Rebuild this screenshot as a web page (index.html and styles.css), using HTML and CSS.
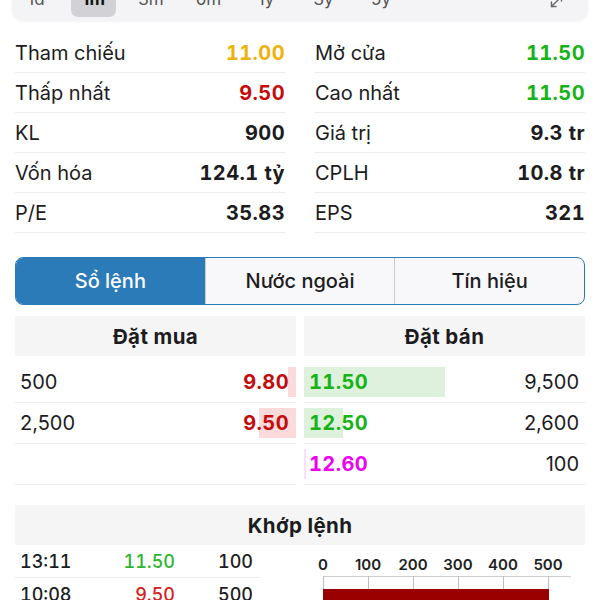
FILE: index.html
```html
<!DOCTYPE html>
<html lang="vi">
  <head>
    <meta charset="UTF-8" />
    <title>Chi tiết cổ phiếu</title>
    <meta name="viewport" content="width=device-width, initial-scale=1" />
    <link rel="stylesheet" href="styles.css">
  </head>
  <body>
    <div class="page">
      <!-- range picker -->
      <div class="range-bar">
        <span class="range">1d</span>
        <span class="range active">1m</span>
        <span class="range">3m</span>
        <span class="range">6m</span>
        <span class="range">1y</span>
        <span class="range">3y</span>
        <span class="range">5y</span>
        <span class="expand">
          <svg width="13" height="13" viewBox="0 0 13 13" fill="none" stroke="#666" stroke-width="1.4" stroke-linecap="round" stroke-linejoin="round">
            <path d="M1.5 11.5 L11.5 1.5" />
            <path d="M1.5 7 L1.5 11.5 L6 11.5" />
            <path d="M7 1.5 L11.5 1.5 L11.5 6" />
          </svg>
        </span>
      </div>

      <!-- quote stats -->
      <div class="stats">
        <div class="stat-col">
          <div class="stat-row"><span>Tham chiếu</span><b class="ref">11.00</b></div>
          <div class="stat-row"><span>Thấp nhất</span><b class="down">9.50</b></div>
          <div class="stat-row"><span>KL</span><b>900</b></div>
          <div class="stat-row"><span>Vốn hóa</span><b>124.1 tỷ</b></div>
          <div class="stat-row"><span>P/E</span><b>35.83</b></div>
        </div>
        <div class="stat-col">
          <div class="stat-row"><span>Mở cửa</span><b class="up">11.50</b></div>
          <div class="stat-row"><span>Cao nhất</span><b class="up">11.50</b></div>
          <div class="stat-row"><span>Giá trị</span><b>9.3 tr</b></div>
          <div class="stat-row"><span>CPLH</span><b>10.8 tr</b></div>
          <div class="stat-row"><span>EPS</span><b>321</b></div>
        </div>
      </div>

      <!-- segmented tabs -->
      <div class="tabs">
        <div class="tab active">Sổ lệnh</div>
        <div class="tab">Nước ngoài</div>
        <div class="tab">Tín hiệu</div>
      </div>

      <!-- order book -->
      <div class="book">
        <div class="book-side buy">
          <div class="book-head">Đặt mua</div>
          <div class="book-row">
            <span class="bar" style="width: 2.8%"></span>
            <span class="vol">500</span><span class="price down">9.80</span>
          </div>
          <div class="book-row">
            <span class="bar" style="width: 13.2%"></span>
            <span class="vol">2,500</span><span class="price down">9.50</span>
          </div>
          <div class="book-row"></div>
        </div>
        <div class="book-side sell">
          <div class="book-head">Đặt bán</div>
          <div class="book-row">
            <span class="bar" style="width: 50%"></span>
            <span class="price up">11.50</span><span class="vol">9,500</span>
          </div>
          <div class="book-row">
            <span class="bar" style="width: 13.9%"></span>
            <span class="price up">12.50</span><span class="vol">2,600</span>
          </div>
          <div class="book-row">
            <span class="bar ceil-bar" style="width: 0.6%"></span>
            <span class="price ceil">12.60</span><span class="vol">100</span>
          </div>
        </div>
      </div>

      <!-- matched trades -->
      <div class="match">
        <div class="match-head">Khớp lệnh</div>
        <div class="match-body">
          <div class="match-list">
            <div class="match-row"><span>13:11</span><span class="num up">11.50</span><span class="num">100</span></div>
            <div class="match-row"><span>10:08</span><span class="num down">9.50</span><span class="num">500</span></div>
          </div>
          <svg class="chart" width="280" height="80" viewBox="0 0 280 80">
            <g class="axis-labels" text-anchor="middle">
              <text x="18" y="25">0</text>
              <text x="63" y="25">100</text>
              <text x="108" y="25">200</text>
              <text x="153" y="25">300</text>
              <text x="198" y="25">400</text>
              <text x="243" y="25">500</text>
            </g>
            <line x1="18" y1="31.5" x2="266" y2="31.5" stroke="#cfcfcf" />
            <g stroke="#bdbdbd">
              <line x1="18.5" y1="31" x2="18.5" y2="44" />
              <line x1="63.5" y1="31" x2="63.5" y2="44" />
              <line x1="108.5" y1="31" x2="108.5" y2="44" />
              <line x1="153.5" y1="31" x2="153.5" y2="44" />
              <line x1="198.5" y1="31" x2="198.5" y2="44" />
              <line x1="243.5" y1="31" x2="243.5" y2="44" />
            </g>
            <rect x="18" y="44" width="226" height="30" fill="#990000" />
          </svg>
        </div>
      </div>
    </div>
  </body>
</html>
```

FILE: styles.css
```css
:root {
  --text: #1c1c1e;
  --muted: #555;
  --line: #ececec;
  --head-bg: #f5f5f5;
  --blue: #2b7bb9;
  --up: #17b317;
  --down: #c40c0c;
  --ref: #f0b20a;
  --ceil: #f000f0;
}
* {
  box-sizing: border-box;
}
body {
  margin: 0;
  font-family: Inter, "Noto Sans", sans-serif;
  color: var(--text);
  background: #fff;
}
.page {
  padding: 0 15px 40px;
  margin-top: -18px;
}

/* ---------- Range bar ---------- */
.range-bar {
  display: flex;
  align-items: flex-end;
  gap: 12.5px;
  height: 38px;
  margin: 0 -3px;
  padding: 0 0 3px 1.5px;
  background: #f4f4f6;
  border-radius: 12px;
  box-shadow: 0 2px 3px rgba(0, 0, 0, 0.05);
}
.range {
  width: 45px;
  height: 29px;
  display: flex;
  align-items: center;
  justify-content: center;
  padding-bottom: 7px;
  font-size: 17px;
  color: var(--muted);
  border-radius: 7px;
}
.range.active {
  background: #d1d1d6;
  color: #111;
  font-weight: 700;
}
.expand {
  display: flex;
  margin: 0 25px 9px auto;
}

/* ---------- Stats ---------- */
.stats {
  display: grid;
  grid-template-columns: 1fr 1fr;
  column-gap: 30px;
  margin-top: 13px;
}
.stat-row {
  display: flex;
  align-items: center;
  justify-content: space-between;
  height: 40px;
  border-bottom: 1px solid var(--line);
  font-size: 20px;
}
.stat-row b {
  font-weight: 700;
  font-variant-numeric: tabular-nums;
  letter-spacing: 0.4px;
}
.up {
  color: var(--up);
}
.down {
  color: var(--down);
}
.ref {
  color: var(--ref);
}
.ceil {
  color: var(--ceil);
}

/* ---------- Tabs ---------- */
.tabs {
  display: flex;
  height: 48px;
  margin-top: 24px;
  border: 1px solid var(--blue);
  border-radius: 8px;
  overflow: hidden;
  background: #f8f8fa;
}
.tab {
  flex: 1;
  display: flex;
  align-items: center;
  justify-content: center;
  font-size: 20px;
  font-weight: 500;
}
.tab + .tab {
  border-left: 1px solid #c9c9cc;
}
.tab.active {
  background: var(--blue);
  color: #fff;
}

/* ---------- Order book ---------- */
.book {
  display: grid;
  grid-template-columns: 1fr 1fr;
  column-gap: 8px;
  margin-top: 11px;
}
.book-head,
.match-head {
  height: 40px;
  display: flex;
  align-items: center;
  justify-content: center;
  background: var(--head-bg);
  font-size: 20.5px;
  font-weight: 700;
  letter-spacing: 0.4px;
}
.book-head {
  margin-bottom: 6px;
}
.book-row {
  position: relative;
  display: flex;
  align-items: center;
  justify-content: space-between;
  height: 41px;
  border-bottom: 1px solid var(--line);
  font-size: 20px;
}
.buy .book-row {
  padding: 0 7px 0 5px;
}
.sell .book-row {
  padding: 0 6px 0 5px;
}
.book-row .bar {
  position: absolute;
  top: 5px;
  bottom: 5px;
}
.buy .bar {
  right: 0;
  background: #fadada;
}
.sell .bar {
  left: 0;
  background: #ddf1dd;
}
.sell .ceil-bar {
  background: #fbe0fb;
}
.book-row .vol,
.book-row .price {
  position: relative;
}
.book-row .price {
  font-weight: 700;
  font-variant-numeric: tabular-nums;
  letter-spacing: 0.4px;
}

/* ---------- Matched trades ---------- */
.match {
  margin-top: 20px;
}
.match-body {
  display: grid;
  grid-template-columns: 245px 1fr;
  column-gap: 45px;
}
.match-row {
  display: grid;
  grid-template-columns: 1fr 80px 78px;
  align-items: center;
  height: 33px;
  padding: 0 7px 0 5px;
  border-bottom: 1px solid var(--line);
  font-size: 18px;
  font-weight: 500;
  font-variant-numeric: tabular-nums;
}
.match-row .num {
  text-align: right;
}
.match-row .up {
  color: #2db52d;
}
.match-row .down {
  color: #d42020;
}
.chart {
  display: block;
}
.axis-labels {
  font-family: Inter, "Noto Sans", sans-serif;
  font-size: 15px;
  font-weight: 600;
  fill: #222;
}
```
